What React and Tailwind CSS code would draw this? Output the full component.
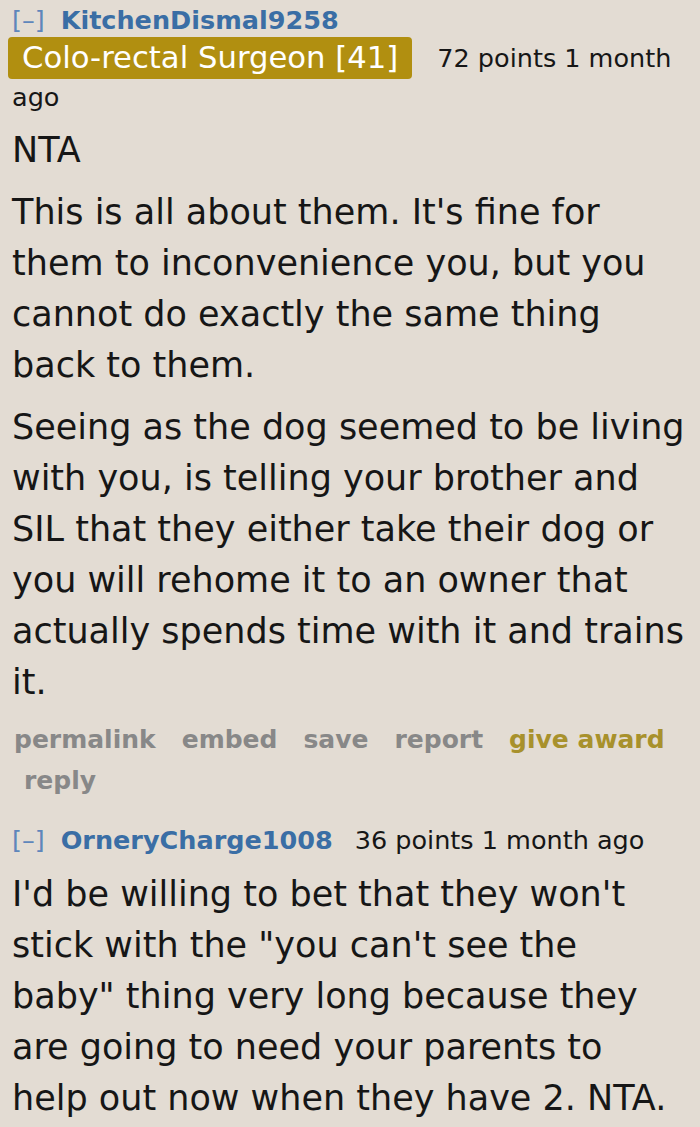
import React from "react";

const Comment = ({ children }) => <div className="px-3">{children}</div>;

const Actions = () => (
  <div className="mt-[11px] pl-[2px] text-[25px] font-bold leading-[41px] text-[#888888]">
    <div className="flex flex-wrap gap-x-[26px]">
      <span>permalink</span>
      <span>embed</span>
      <span>save</span>
      <span>report</span>
      <span className="text-[#a8912c]">give award</span>
    </div>
    <div className="pl-[10px]">reply</div>
  </div>
);

const Author = ({ name }) => (
  <>
    <span className="text-[#5f86bb]">[–]</span>
    <span className="ml-[16px] font-bold text-[#3a6ea5]">{name}</span>
  </>
);

const App = () => {
  return (
    <div
      className="min-h-[1127px] w-[700px] bg-[#e3dcd3] text-[#161616]"
      style={{ fontFamily: "Verdana, 'DejaVu Sans', sans-serif" }}
    >
      <Comment>
        <div className="h-[37px] text-[25.5px] leading-[40px]">
          <Author name="KitchenDismal9258" />
        </div>
        <div className="flex items-center">
          <span className="-ml-[4px] flex h-[42px] items-center rounded-[4px] bg-[#b18f10] px-[14px] text-[30.7px] text-white">
            Colo-rectal Surgeon [41]
          </span>
          <span className="ml-[25px] text-[25.5px]">72 points 1 month</span>
        </div>
        <div className="text-[25.5px] leading-[36px]">ago</div>

        <div className="mt-[10px] text-[35px] leading-[51px]">
          <p>NTA</p>
          <p className="mt-[11px]">
            This is all about them. It's fine for them to inconvenience you, but you cannot do exactly the same thing back to them.
          </p>
          <p className="mt-[11px]">
            Seeing as the dog seemed to be living with you, is telling your brother and SIL that they either take their dog or you will rehome it to an owner that actually spends time with it and trains it.
          </p>
        </div>
        <Actions />
      </Comment>

      <Comment>
        <div className="mt-[19px] text-[25.5px] leading-[40px]">
          <Author name="OrneryCharge1008" />
          <span className="ml-[22px]">36 points 1 month ago</span>
        </div>
        <p className="mt-[9px] text-[35px] leading-[51px]">
          I'd be willing to bet that they won't stick with the "you can't see the baby" thing very long because they are going to need your parents to help out now when they have 2. NTA.
        </p>
      </Comment>
    </div>
  );
};

export default App;
